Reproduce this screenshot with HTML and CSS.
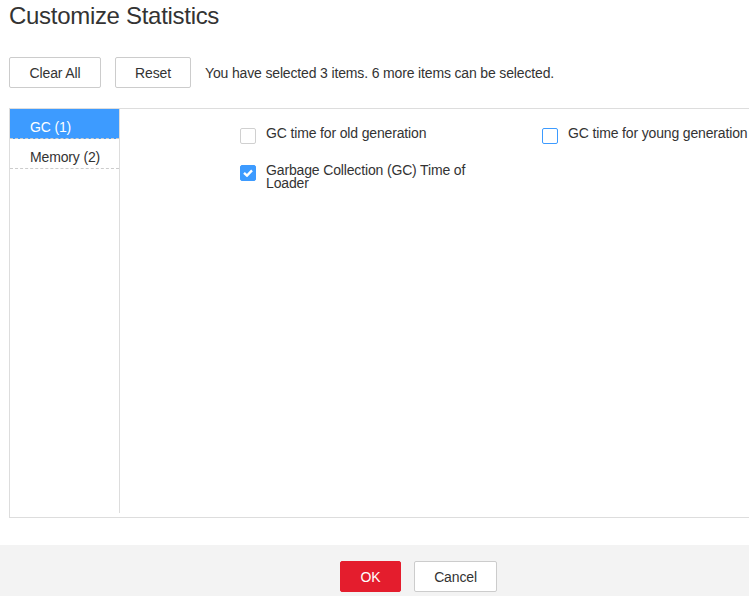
FILE: index.html
```html
<!DOCTYPE html>
<html>
<head>
    <title>Customize Statistics</title>
    <link rel="stylesheet" href="styles.css">
</head>
<body>
    <div class="dialog">
        <div class="dialog-body">
            <h1>Customize Statistics</h1>
            <div class="toolbar">
                <button class="btn btn-wide">Clear All</button>
                <button class="btn">Reset</button>
                <span class="hint">You have selected 3 items. 6 more items can be selected.</span>
            </div>
            <div class="panel">
                <ul class="groups">
                    <li class="group active">GC (1)</li>
                    <li class="group">Memory (2)</li>
                </ul>
                <div class="options">
                    <label class="option">
                        <span class="box"></span>
                        <span class="text">GC time for old generation</span>
                    </label>
                    <label class="option">
                        <span class="box hover"></span>
                        <span class="text">GC time for young generation</span>
                    </label>
                    <label class="option">
                        <span class="box checked">
                            <svg width="10" height="8" viewBox="0 0 10 8"><path d="M1 3.8 L4 6.6 L9 1.4" fill="none" stroke="#fff" stroke-width="2.4"/></svg>
                        </span>
                        <span class="text">Garbage Collection (GC) Time of Loader</span>
                    </label>
                </div>
            </div>
        </div>
        <div class="dialog-footer">
            <button class="btn btn-primary">OK</button>
            <button class="btn btn-footer">Cancel</button>
        </div>
    </div>
</body>
</html>
```

FILE: styles.css
```css
html, body { margin: 0; overflow: hidden; background: #fff; }
body { font-family: Arial, "Liberation Sans", sans-serif; font-size: 14px; color: #333; letter-spacing: -0.15px; }
.dialog { width: 837px; }
.dialog-body { height: 545px; padding: 0 9px; box-sizing: border-box; }
h1 { margin: 0; font-size: 24px; font-weight: normal; line-height: 32px; color: #333; letter-spacing: -0.3px; }
.toolbar { display: flex; align-items: center; gap: 14px; margin-top: 25px; }
.btn { height: 31px; min-width: 76px; padding: 0 19px; border: 1px solid #ccc; border-radius: 2px; background: #fff; color: #333; font-family: inherit; font-size: 14px; letter-spacing: inherit; }
.btn-wide { min-width: 92px; }
.hint { color: #333; }
.panel { display: flex; align-items: flex-start; height: 410px; margin-top: 20px; border: 1px solid #ddd; box-sizing: border-box; }
.groups { list-style: none; margin: 0; padding: 0; width: 109px; flex-shrink: 0; height: 404px; border-right: 1px solid #ddd; }
.group { height: 22px; line-height: 22px; padding: 7px 0 0 20px; border-bottom: 1px dashed #ccc; white-space: nowrap; }
.group.active { background: #3d9bff; color: #fff; }
.options { display: grid; grid-template-columns: 302px 302px; row-gap: 21px; padding: 19px 0 0 120px; }
.option { display: flex; align-items: flex-start; gap: 10px; }
.box { display: flex; align-items: center; justify-content: center; width: 16px; height: 16px; border: 1px solid #d0d0d0; border-radius: 2px; box-sizing: border-box; flex-shrink: 0; }
.box.hover { border-color: #3d9bff; }
.box.checked { background: #3d9bff; border-color: #3d9bff; }
.text { max-width: 214px; line-height: 13px; margin-top: -1px; }
.dialog-footer { display: flex; justify-content: center; gap: 13px; height: 51px; padding-top: 16px; box-sizing: border-box; background: #f3f3f3; }
.btn-primary { min-width: 61px; background: #e41d2d; border-color: #e41d2d; color: #fff; }
.btn-footer { min-width: 83px; }
```
